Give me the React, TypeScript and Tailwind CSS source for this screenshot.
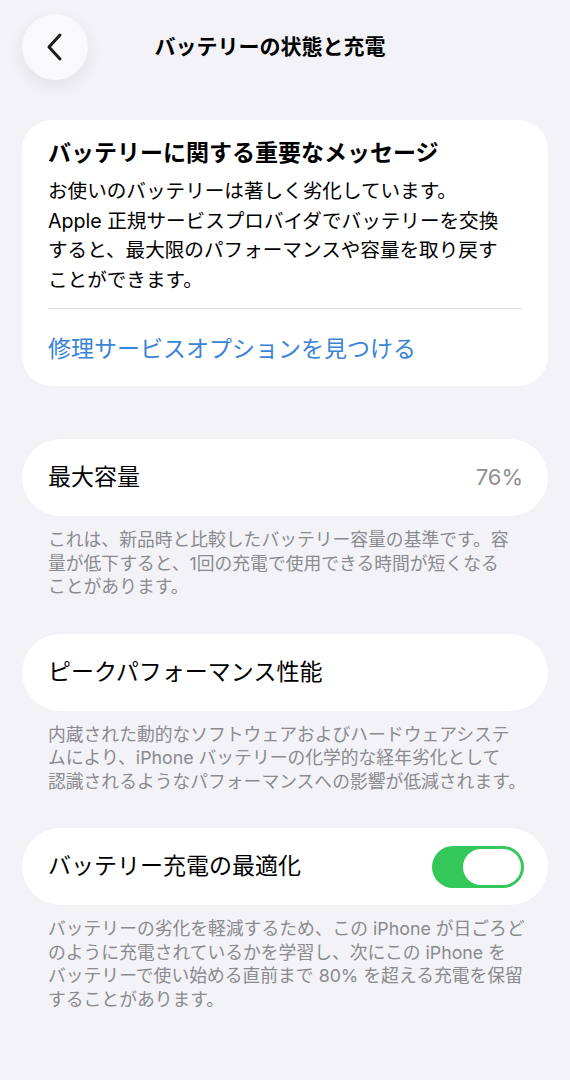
const font = { fontFamily: 'Inter, "Noto Sans CJK JP", sans-serif' };

function Footer({ lines }: { lines: string[] }) {
  return (
    <div className="mt-[12px] px-[26px] text-[17.8px] leading-[23.5px] text-[#8a8a8f] whitespace-nowrap">
      {lines.map((l, i) => (
        <div key={i}>{l}</div>
      ))}
    </div>
  );
}

function Toggle() {
  return (
    <div className="w-[92px] h-[42px] rounded-full bg-[#34c759] p-[3px] flex justify-end">
      <div className="w-[58px] h-[36px] rounded-full bg-white" />
    </div>
  );
}

export default function App() {
  return (
    <div className="min-h-[1080px] w-[570px] bg-[#f2f2f7] text-black" style={font}>
      <div className="relative h-[100px] flex items-start pt-[14px] pl-[22px]">
        <button className="w-[66px] h-[66px] rounded-full bg-[#f9f9fb] shadow-[0_6px_18px_rgba(0,0,0,0.07)] flex items-center justify-center">
          <svg width="20" height="30" viewBox="0 0 20 30" fill="none">
            <polyline points="15,3 4,15 15,27" stroke="#1c1c1e" strokeWidth="3" strokeLinecap="round" strokeLinejoin="round" />
          </svg>
        </button>
        <h1 className="absolute left-0 right-[30px] top-[32px] text-center text-[21px] leading-[30px] font-bold">
          バッテリーの状態と充電
        </h1>
      </div>

      <div className="px-[22px] pt-[20px]">
        <div className="bg-white rounded-[30px] px-[26px] pt-[18px] pb-[22px]">
          <h2 className="text-[23px] leading-[30px] font-bold">バッテリーに関する重要なメッセージ</h2>
          <div className="mt-[9px] text-[19.6px] leading-[29.5px] whitespace-nowrap">
            <div>お使いのバッテリーは著しく劣化しています。</div>
            <div>Apple 正規サービスプロバイダでバッテリーを交換</div>
            <div>すると、最大限のパフォーマンスや容量を取り戻す</div>
            <div>ことができます。</div>
          </div>
          <div className="mt-[13px] h-px bg-[#dedee2]" />
          <div className="mt-[25px] text-[23px] leading-[30px] text-[#3a84d8]">修理サービスオプションを見つける</div>
        </div>

        <div className="mt-[53px] bg-white rounded-full h-[77px] pl-[26px] pr-[25px] flex items-center justify-between">
          <span className="text-[23px]">最大容量</span>
          <span className="text-[22px] text-[#8e8e93]">76%</span>
        </div>
        <Footer
          lines={[
            "これは、新品時と比較したバッテリー容量の基準です。容",
            "量が低下すると、1回の充電で使用できる時間が短くなる",
            "ことがあります。",
          ]}
        />

        <div className="mt-[35px] bg-white rounded-full h-[77px] pl-[26px] pr-[25px] flex items-center">
          <span className="text-[23px]">ピークパフォーマンス性能</span>
        </div>
        <Footer
          lines={[
            "内蔵された動的なソフトウェアおよびハードウェアシステ",
            "ムにより、iPhone バッテリーの化学的な経年劣化として",
            "認識されるようなパフォーマンスへの影響が低減されます。",
          ]}
        />

        <div className="mt-[35px] bg-white rounded-full h-[77px] pl-[26px] pr-[24px] flex items-center justify-between">
          <span className="text-[23px]">バッテリー充電の最適化</span>
          <Toggle />
        </div>
        <Footer
          lines={[
            "バッテリーの劣化を軽減するため、この iPhone が日ごろど",
            "のように充電されているかを学習し、次にこの iPhone を",
            "バッテリーで使い始める直前まで 80% を超える充電を保留",
            "することがあります。",
          ]}
        />
      </div>
    </div>
  );
}
